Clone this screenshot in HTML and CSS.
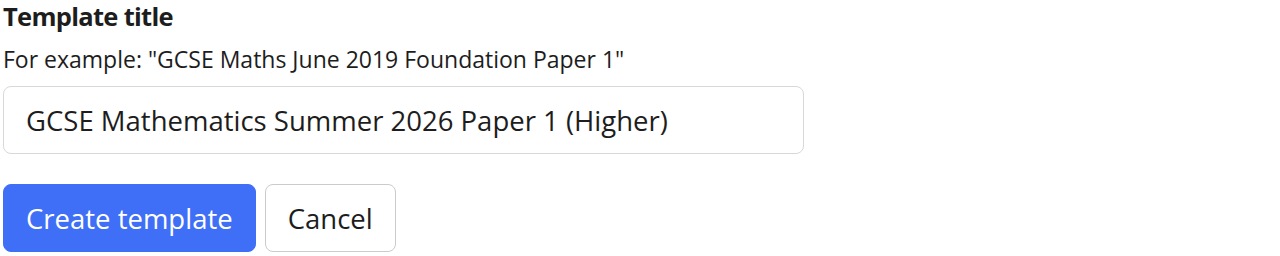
FILE: index.html
```html
<!DOCTYPE html>
<html lang="en">
<head>
    <meta charset="UTF-8">
    <meta name="viewport" content="width=device-width, initial-scale=1.0">
    <title>New template</title>
    <link rel="stylesheet" href="styles.css">
</head>
<body>
    <form class="template-form">
        <div class="field">
            <label class="field-label" for="title">Template title</label>
            <div class="field-hint">For example: "GCSE Maths June 2019 Foundation Paper 1"</div>
            <input class="field-input" type="text" id="title" value="GCSE Mathematics Summer 2026 Paper 1 (Higher)">
        </div>

        <div class="buttons">
            <button type="submit" class="btn btn-primary">Create template</button>
            <button type="button" class="btn btn-secondary">Cancel</button>
        </div>
    </form>
</body>
</html>
```

FILE: styles.css
```css
* {
    margin: 0;
    padding: 0;
    box-sizing: border-box;
}

body {
    font-family: "Open Sans", sans-serif;
    color: #1d1d1d;
    background: #fff;
}

.template-form {
    padding: 0 3px;
    display: flex;
    flex-direction: column;
    gap: 30px;
}

.field {
    display: flex;
    flex-direction: column;
}

.field-label {
    font-size: 25.5px;
    font-weight: 700;
    line-height: 32px;
    letter-spacing: -0.7px;
}

.field-hint {
    font-size: 23px;
    line-height: 30px;
    margin-top: 12px;
}

.field-input {
    margin-top: 12px;
    width: 801px;
    height: 68px;
    padding: 0 22px;
    font-family: inherit;
    font-size: 27.5px;
    color: #1d1d1d;
    border: 1.5px solid #d8d8d8;
    border-radius: 8px;
    outline: none;
}

.buttons {
    display: flex;
    gap: 9px;
}

.btn {
    height: 68px;
    padding: 0 22px;
    font-family: inherit;
    font-size: 27.5px;
    border-radius: 8px;
    cursor: pointer;
}

.btn-primary {
    background: #3f6ff6;
    border: 1.5px solid #3f6ff6;
    color: #fff;
}

.btn-secondary {
    background: #fff;
    border: 1.5px solid #cbcbcb;
    color: #1d1d1d;
}
```
